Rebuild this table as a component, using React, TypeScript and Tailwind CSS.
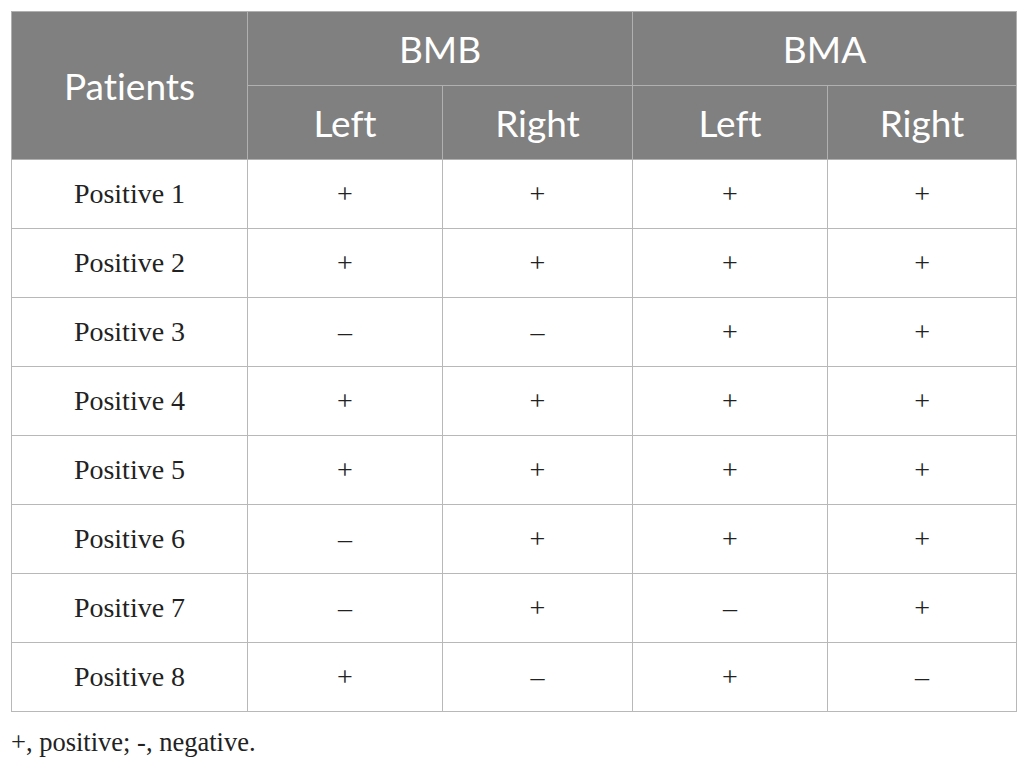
const rows: [string, string, string, string, string][] = [
  ["Positive 1", "+", "+", "+", "+"],
  ["Positive 2", "+", "+", "+", "+"],
  ["Positive 3", "–", "–", "+", "+"],
  ["Positive 4", "+", "+", "+", "+"],
  ["Positive 5", "+", "+", "+", "+"],
  ["Positive 6", "–", "+", "+", "+"],
  ["Positive 7", "–", "+", "–", "+"],
  ["Positive 8", "+", "–", "+", "–"],
]

const head =
  "border border-[#b0b0b0] bg-[#808080] text-white font-normal text-[37px] font-['Lato',sans-serif] [font-variant-ligatures:none]"
const cell =
  "border border-[#b8b8b8] text-center text-[28px] text-[#222] font-['Liberation_Serif',serif] h-[69px]"

export default function App() {
  return (
    <div className="min-h-[765px] w-[1026px] bg-white pl-[11px] pt-[11px]">
      <table className="border-collapse table-fixed w-[1005px]">
        <colgroup>
          <col className="w-[236px]" />
          <col className="w-[195px]" />
          <col className="w-[190px]" />
          <col className="w-[195px]" />
          <col className="w-[189px]" />
        </colgroup>
        <thead>
          <tr className="h-[74px]">
            <th rowSpan={2} className={head}>Patients</th>
            <th colSpan={2} className={head}>BMB</th>
            <th colSpan={2} className={head}>BMA</th>
          </tr>
          <tr className="h-[74px]">
            <th className={head}>Left</th>
            <th className={head}>Right</th>
            <th className={head}>Left</th>
            <th className={head}>Right</th>
          </tr>
        </thead>
        <tbody>
          {rows.map((r) => (
            <tr key={r[0]}>
              {r.map((v, i) => (
                <td key={i} className={cell}>{v}</td>
              ))}
            </tr>
          ))}
        </tbody>
      </table>
      <p className="mt-[17px] text-[26.5px] text-[#222] font-['Liberation_Serif',serif] leading-none">
        +, positive; -, negative.
      </p>
    </div>
  )
}
